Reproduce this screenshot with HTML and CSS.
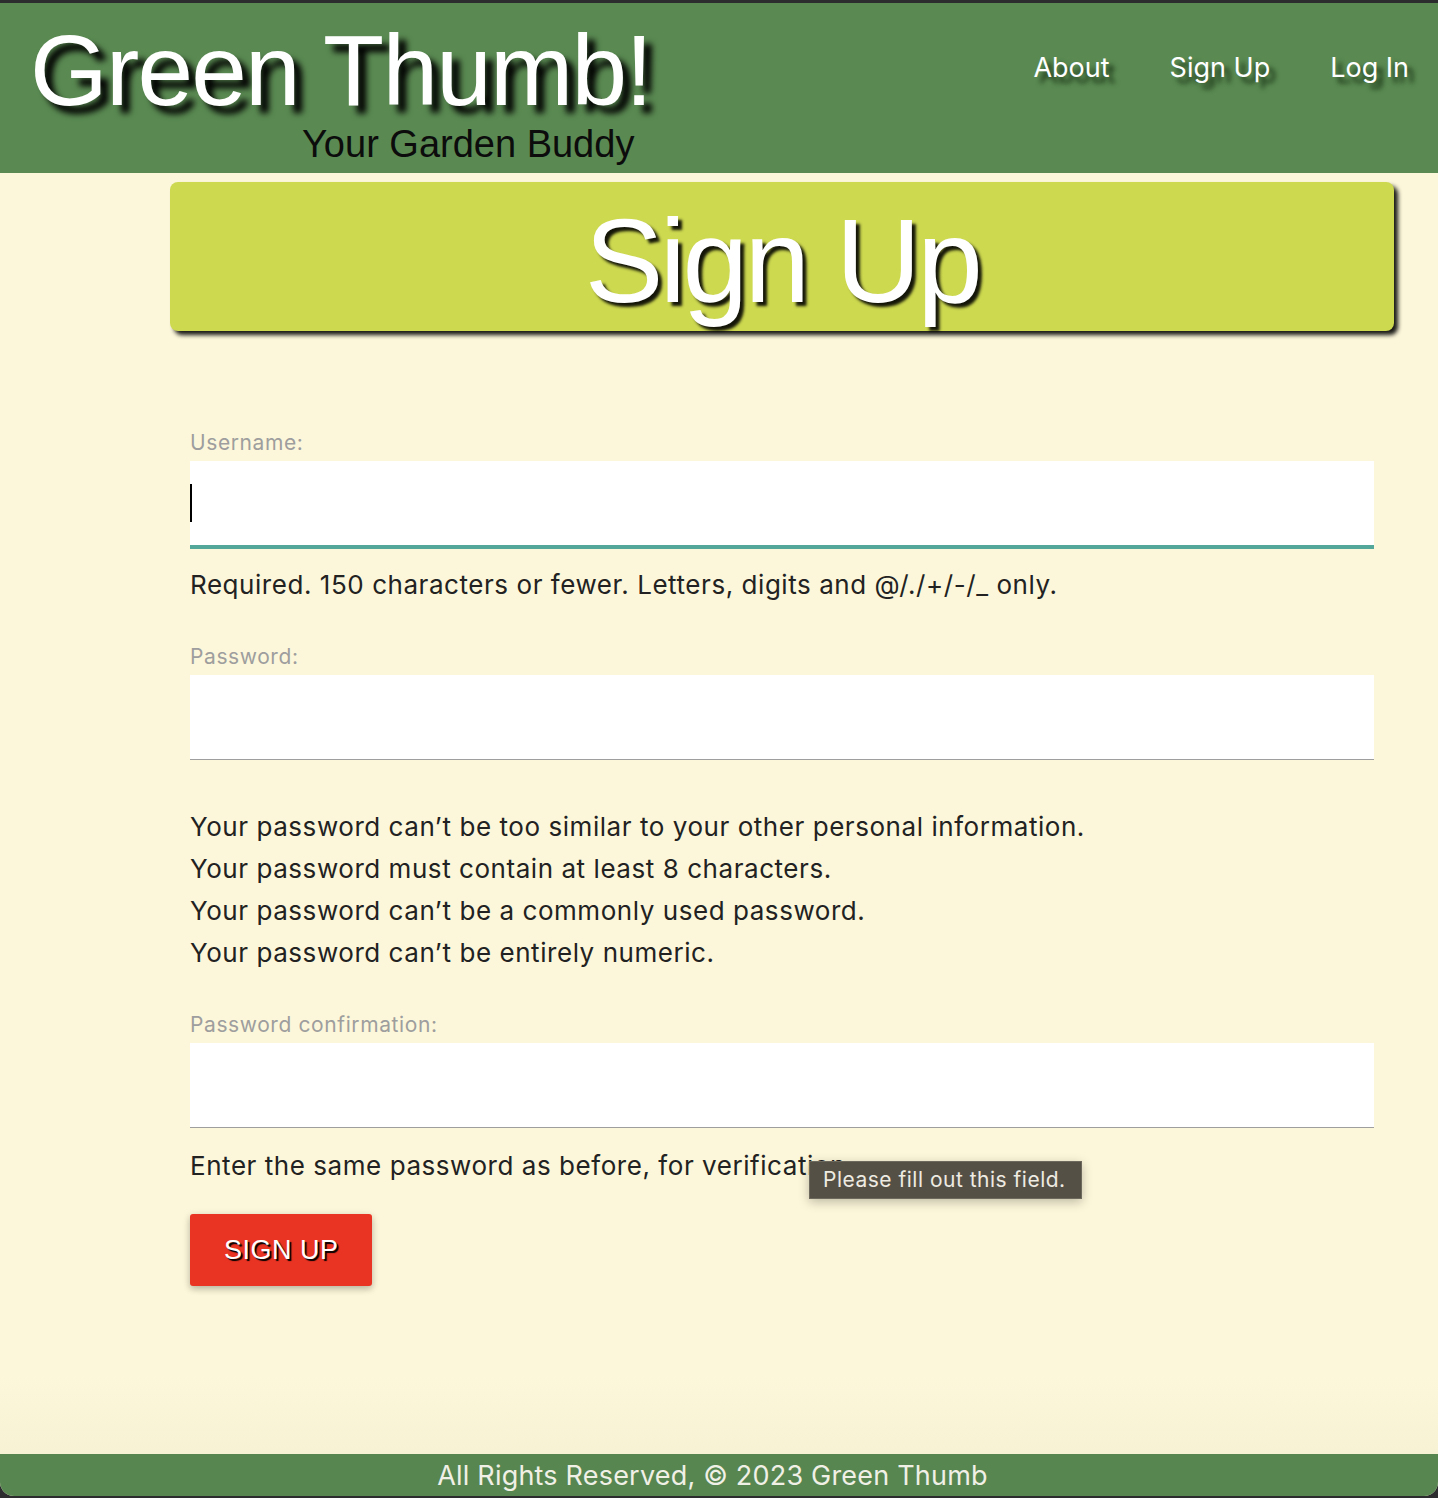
FILE: index.html
```html
<!DOCTYPE html>
<html lang="en">
<head>
<meta charset="utf-8">
<title>Green Thumb! - Sign Up</title>
<link rel="stylesheet" href="styles.css">
</head>
<body>
<div class="window">
  <header class="site-header">
    <div class="brand">
      <h1 class="brand-title">Green Thumb!</h1>
      <p class="brand-tagline">Your Garden Buddy</p>
    </div>
    <nav class="site-nav">
      <a class="nav-link" href="#">About</a>
      <a class="nav-link" href="#">Sign Up</a>
      <a class="nav-link" href="#">Log In</a>
    </nav>
  </header>

  <main class="main">
    <div class="banner">
      <h2 class="banner-title">Sign Up</h2>
    </div>

    <form class="signup-form">
      <div class="field">
        <label class="field-label" for="username">Username:</label>
        <div class="input-wrap">
          <input class="field-input is-focused" id="username" type="text">
          <span class="caret"></span>
        </div>
        <p class="helper">Required. 150 characters or fewer. Letters, digits and @/./+/-/_ only.</p>
      </div>

      <div class="field">
        <label class="field-label" for="password1">Password:</label>
        <div class="input-wrap">
          <input class="field-input" id="password1" type="password">
        </div>
        <ul class="help-list">
          <li>Your password can’t be too similar to your other personal information.</li>
          <li>Your password must contain at least 8 characters.</li>
          <li>Your password can’t be a commonly used password.</li>
          <li>Your password can’t be entirely numeric.</li>
        </ul>
      </div>

      <div class="field">
        <label class="field-label" for="password2">Password confirmation:</label>
        <div class="input-wrap">
          <input class="field-input" id="password2" type="password">
        </div>
        <p class="helper helper-tip">Enter the same password as before, for verification.<span class="tooltip">Please fill out this field.</span></p>
      </div>

      <button class="btn-submit" type="button">Sign Up</button>
    </form>
  </main>

  <footer class="site-footer">All Rights Reserved, © 2023 Green Thumb</footer>
</div>
</body>
</html>
```

FILE: styles.css
```css
html, body {
  margin: 0;
  padding: 0;
}

body {
  background: #2c2c2f;
  height: 1498px;
  overflow: hidden;
}

.window {
  margin-top: 3px;
  height: 1493px;
  background: #fcf7da;
  border-radius: 0 0 14px 14px;
  overflow: hidden;
  display: flex;
  flex-direction: column;
}

/* Header */
.site-header {
  background: #5a8a52;
  height: 170px;
  box-sizing: border-box;
  padding: 17px 29px 0 30px;
  display: flex;
  justify-content: space-between;
  align-items: flex-start;
}

.brand-title {
  margin: 0;
  font-family: "Liberation Sans", Arial, sans-serif;
  font-weight: normal;
  font-size: 100px;
  line-height: 100px;
  letter-spacing: -1.8px;
  color: #ffffff;
  text-shadow: 8px 8px 6px #000;
}

.brand-tagline {
  margin: 5px 0 0 272px;
  font-family: "Liberation Sans", Arial, sans-serif;
  font-size: 38px;
  line-height: 38px;
  color: #0c0c0c;
}

.site-nav {
  margin-top: 31px;
  display: flex;
  gap: 60px;
}

.nav-link {
  font-family: Inter, "Noto Sans", sans-serif;
  font-size: 27px;
  line-height: 34px;
  color: #ffffff;
  text-decoration: none;
  text-shadow: 6px 6px 5px rgba(10, 30, 8, 0.85);
}

/* Main */
.main {
  flex: 1;
  background: linear-gradient(to bottom, #fcf7da 0, #fcf7da 94%, #f7f2d4 100%);
}

.banner {
  margin: 9px 0 0 170px;
  width: 1224px;
  height: 149px;
  box-sizing: border-box;
  padding: 20px 0 11px;
  background: #cdd94f;
  border-radius: 8px;
  box-shadow: 4px 4px 4px rgba(0, 0, 0, 0.9);
  text-align: center;
}

.banner-title {
  margin: 0;
  font-family: "Liberation Sans", Arial, sans-serif;
  font-weight: normal;
  font-size: 118px;
  line-height: 118px;
  letter-spacing: -3.6px;
  color: #ffffff;
  text-shadow: 4px 4px 3px rgba(0, 0, 0, 0.9);
}

/* Form */
.signup-form {
  margin: 100px 0 0 190px;
  width: 1184px;
  font-family: Inter, "Noto Sans", sans-serif;
}

.field + .field {
  margin-top: 39px;
}

.field-label {
  display: block;
  font-size: 21px;
  line-height: 24px;
  letter-spacing: 0.6px;
  color: #9e9e9e;
}

.input-wrap {
  position: relative;
  margin-top: 6px;
}

.field-input {
  display: block;
  width: 100%;
  height: 84px;
  box-sizing: content-box;
  padding: 0;
  margin: 0;
  border: none;
  border-bottom: 1px solid #9e9e9e;
  background: #ffffff;
  outline: none;
  font-size: 24px;
}

.field-input.is-focused {
  border-bottom: 2px solid #52a79a;
  box-shadow: 0 2px 0 0 #52a79a;
}

.caret {
  position: absolute;
  left: 0;
  top: 23px;
  width: 2px;
  height: 38px;
  background: #000;
}

.helper {
  margin: 17px 0 0;
  font-size: 26px;
  line-height: 42px;
  letter-spacing: 0.55px;
  color: #222222;
}

.helper-tip {
  position: relative;
}

.help-list {
  list-style: none;
  margin: 46px 0 0;
  padding: 0;
  font-size: 26px;
  line-height: 42px;
  letter-spacing: 0.55px;
  color: #222222;
}

.tooltip {
  position: absolute;
  left: 619px;
  top: 16px;
  height: 38px;
  box-sizing: border-box;
  padding: 0 15px 0 13px;
  background: #555045;
  border: 1px solid #6e695d;
  color: #eeebe2;
  font-size: 21px;
  line-height: 36px;
  letter-spacing: 0.5px;
  white-space: nowrap;
  box-shadow: 0 3px 10px rgba(0, 0, 0, 0.25);
}

.btn-submit {
  display: block;
  margin-top: 27px;
  height: 72px;
  padding: 0 33px 0 34px;
  border: none;
  border-radius: 3px;
  background: #e93323;
  color: #ffffff;
  font-family: "Liberation Sans", Arial, sans-serif;
  font-size: 27px;
  letter-spacing: 0.5px;
  text-transform: uppercase;
  text-shadow: 2px 2px 1px #000;
  box-shadow: 0 3px 6px rgba(0, 0, 0, 0.2), 0 2px 10px rgba(0, 0, 0, 0.1);
  cursor: pointer;
}

/* Footer */
.site-footer {
  height: 42px;
  padding-right: 13px;
  background: #578650;
  color: #f0f0e6;
  font-family: Inter, "Noto Sans", sans-serif;
  font-size: 27px;
  line-height: 44px;
  letter-spacing: 0.2px;
  text-align: center;
}
```
